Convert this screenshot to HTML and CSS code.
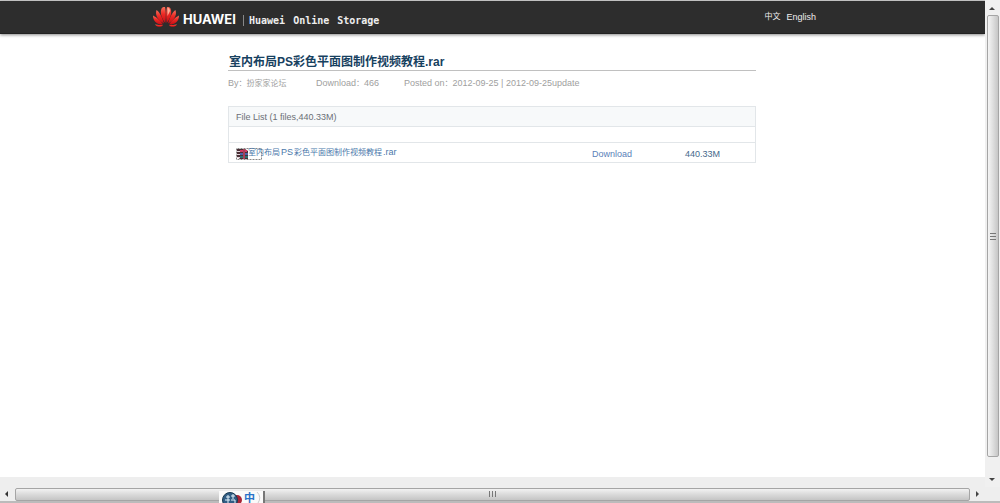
FILE: index.html
```html
<!DOCTYPE html>
<html lang="zh-CN">
<head>
<meta charset="utf-8">
<title>Huawei Online Storage</title>
<link rel="stylesheet" href="styles.css">
</head>
<body>
<div class="frame">
  <div class="page">
    <header class="topbar">
      <a class="brand" href="#" aria-label="Huawei">
        <svg class="petals" viewBox="0 0 28 22" width="28" height="22" aria-hidden="true">
          <defs><linearGradient id="petal" x1="0" y1="0" x2="0" y2="1"><stop offset="0" stop-color="#f8705c"/><stop offset=".45" stop-color="#ed2924"/><stop offset="1" stop-color="#c40c14"/></linearGradient></defs>
          <g fill="url(#petal)">
            <path d="M13.300 17C10 13 7.500 7 9.500 2.500 10.500 1 12 .8 13 1 14 5 14 12 13.300 17Z"/>
            <path d="M14.700 17C18 13 20.500 7 18.500 2.500 17.500 1 16 .8 15 1 14 5 14 12 14.700 17Z"/>
            <path d="M12 17.500C7 15 2.500 10 4.500 4 7 5 10.500 12 12 17.500Z"/>
            <path d="M16 17.500C21 15 25.500 10 23.500 4 21 5 17.500 12 16 17.500Z"/>
            <path d="M11 18.500C6 19 1 16 1 9.500 4 11 9 15 11 18.500Z"/>
            <path d="M17 18.500C22 19 27 16 27 9.500 24 11 19 15 17 18.500Z"/>
            <path d="M11 19.300C9 21.500 5 21.500 3 18.500 6 19 8 19 11 19.300Z"/>
            <path d="M17 19.300C19 21.500 23 21.500 25 18.500 22 19 20 19 17 19.300Z"/>
          </g>
          <path d="M15.500 2C17 1.500 18 3 18 5L15.500 10Z" fill="#ffb09a"/>
        </svg>
        <span class="wordmark">HUAWEI</span>
      </a>
      <div class="product"><span>Huawei</span><span>Online</span><span>Storage</span></div>
      <nav class="langs"><a class="cjk" href="#">中文</a><a href="#">English</a></nav>
    </header>
    <main class="content">
      <h1 class="title">室内布局PS彩色平面图制作视频教程.rar</h1>
      <div class="meta">
        <span class="by">By<span class="cjk">：扮家家论坛</span></span>
        <span class="count">Download<span class="cjk">：</span>466</span>
        <span>Posted on<span class="cjk">：</span>2012-09-25 | 2012-09-25update</span>
      </div>
      <table class="files">
        <colgroup><col class="col-name"><col class="col-get"><col></colgroup>
        <thead>
          <tr class="head"><th colspan="3">File List (1 files,440.33M)</th></tr>
        </thead>
        <tbody>
          <tr class="blank"><td colspan="3"></td></tr>
          <tr class="file">
            <td>
              <a class="filelink" href="#">
                <svg class="rar" viewBox="0 0 26 13" width="26" height="13" aria-hidden="true">
                  <path d="M.5 12.500V1.500H25.500V12.500Z" fill="none" stroke="#888" stroke-dasharray="2 1"/>
                  <path d="M1 2H9L12 4V12H4L1 10Z" fill="#4a3036"/>
                  <path d="M4 3H11V5H4Z" fill="#d43a62"/><path d="M4 6H12V8H4Z" fill="#4d63a8"/><path d="M4 9H12V11H4Z" fill="#2d6f70"/>
                  <path d="M1 4.500H4M1 7.500H4M1 10.500H4" stroke="#e5d7dc"/>
                  <path d="M7 2H9V12H7Z" fill="#a8405a"/>
                </svg>
                <span class="filename"><span class="cjk">室内布局</span><span>PS</span><span class="cjk">彩色平面图制作视频教程</span><span>.rar</span></span>
              </a>
            </td>
            <td class="get"><a href="#">Download</a></td>
            <td class="size">440.33M</td>
          </tr>
        </tbody>
      </table>
    </main>
  </div>
  <div class="vbar">
    <svg viewBox="0 0 15 15" width="15" height="15"><path d="M4 10H10L7 7Z" fill="#444"/></svg>
    <div class="thumb"><svg viewBox="0 0 9 9" width="9" height="9"><path d="M1 1.500H7M1 4.500H7M1 7.500H7" stroke="#777"/></svg></div>
    <svg viewBox="0 0 15 30" width="15" height="30"><path d="M4 21H10L7 24Z" fill="#444"/></svg>
  </div>
  <div class="strip"></div>
  <div class="hbar">
    <svg viewBox="0 0 15 14" width="15" height="14"><path d="M8 4V10L5 7Z" fill="#333"/></svg>
    <div class="thumb"><svg viewBox="0 0 9 9" width="9" height="9"><path d="M1.500 1V7M4.500 1V7M7.500 1V7" stroke="#777"/></svg></div>
    <svg viewBox="0 0 30 14" width="30" height="14"><path d="M6 4V10L9 7Z" fill="#444"/></svg>
  </div>
  <div class="ime">
    <svg viewBox="0 0 25 12" width="25" height="12" aria-hidden="true">
      <circle cx="18" cy="9" r="5" fill="#a92436"/>
      <circle cx="11" cy="9" r="7.500" fill="#315d84" stroke="#173850"/>
      <path d="M7 6H11M9 4V12M6 9H11M12 5H16M14 3V8M12 9H16V12" stroke="#e3f2fb" fill="none"/>
    </svg>
    <span>中</span>
    <svg viewBox="0 0 9 12" width="9" height="12" aria-hidden="true"><path d="M2 1Q7 6 3 12" fill="none" stroke="#ccc"/></svg>
  </div>
</div>
</body>
</html>
```
FILE: styles.css
```css
* { box-sizing: border-box; }
body {
  margin: 0;
  background: #fff;
  font: 9px/12px "Liberation Sans", "Noto Sans CJK SC", sans-serif;
}
a { color: inherit; text-decoration: none; }
svg { display: block; flex: none; }
.cjk { font-size: 8px; }

.frame {
  position: relative;
  display: grid;
  grid-template-columns: 1fr 15px;
  grid-template-rows: 1fr 10px 16px;
  min-height: 100vh;
}
.page { border-top: 1px solid #ccc; }

.topbar {
  display: flex;
  align-items: center;
  height: 33px;
  padding: 0 169px 0 152px;
  background: #2d2d2d;
  border-bottom: 1px solid #222;
  box-shadow: 0 1px 3px #888;
  color: #eee;
}
.brand { display: flex; align-items: center; gap: 3px; }
.wordmark { min-width: 54px; padding-top: 4px; font: bold 13px/16px Inter, "Liberation Sans", sans-serif; color: #fff; }
.product {
  display: flex;
  gap: 8px;
  margin: 6px 0 0 6px;
  padding-left: 5px;
  border-left: 1px solid #888;
  font: bold 10px/11px "DejaVu Sans Mono", monospace;
}
.langs { display: flex; gap: 6px; margin-left: auto; }

.content { width: 53.6%; margin: 19px 0 0 228px; }
.title {
  margin: 0;
  padding: 1px 0 0 1px;
  border-bottom: 1px solid #c0c0c0;
  font-size: 12px;
  line-height: 16px;
  color: #17415f;
}
.meta {
  display: flex;
  padding-top: 6px;
  color: #a0a0a0;
}
.by, .count { width: 88px; }

.files {
  width: 100%;
  margin-top: 16px;
  border: 1px solid #e2e6e9;
  border-collapse: collapse;
  table-layout: fixed;
}
.col-name { width: 69%; }
.col-get { width: 12%; }
.files th, .files td { padding: 0; border-bottom: 1px solid #e2e6e9; }
.files .head th {
  height: 20px;
  padding-left: 7px;
  background: #f7f9fa;
  font-weight: normal;
  text-align: left;
  color: #6b6f76;
}
.blank td { height: 16px; }
.file td { height: 20px; }
.filelink { display: flex; align-items: center; padding: 2px 0 0 7px; color: #4a78ab; }
.filename { display: flex; gap: 1px; margin-left: -14px; align-items: baseline; padding-bottom: 3px; }
.files .get { padding-top: 3px; color: #5b7fb9; }
.files .size { padding: 3px 35px 0 0; text-align: right; color: #44698c; }

.vbar {
  display: flex;
  flex-direction: column;
  background: #f0f0f0;
  grid-row: 1 / 3;
  grid-column: 2;
}
.thumb {
  display: flex;
  flex: 1;
  align-items: center;
  justify-content: center;
  border: 1px solid #a5a5a5;
  border-radius: 2px;
}
.vbar .thumb { margin: 0 1px 0 2px; background: linear-gradient(to right, #f5f5f5, #dedede 50%, #c6c6c6); }
.strip { background: #eee; }
.hbar {
  display: flex;
  grid-column: 1 / 3;
  background: #eee;
  border-bottom: 2px solid #bbb;
}
.hbar .thumb { margin-top: 1px; background: linear-gradient(#f2f2f2, #dadada 50%, #c5c5c5); }

.ime {
  position: absolute;
  left: 219px;
  bottom: 0;
  display: flex;
  width: 46px;
  height: 12px;
  background: #fafafa;
  border-right: 2px solid #777;
  color: #2972c8;
}
.ime span { font: bold 11px/12px "Noto Sans CJK SC", sans-serif; }
```
